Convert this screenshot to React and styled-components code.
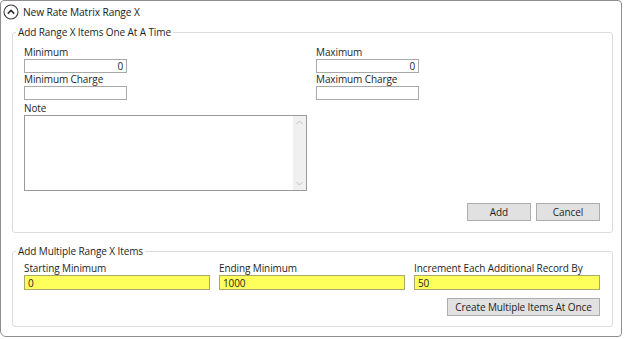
import React from "react";
import styled, { createGlobalStyle } from "styled-components";

const GlobalStyle = createGlobalStyle`
  html, body {
    margin: 0;
    padding: 0;
    background: #ffffff;
  }
  body {
    font-family: "Open Sans", "Noto Sans", Arial, sans-serif;
    font-size: 10px;
    letter-spacing: -0.1px;
    color: #1e1e1e;
  }
`;

const Frame = styled.div`
  width: 622px;
  box-sizing: border-box;
  border: 1px solid #8e8e8e;
  border-radius: 4px 4px 4px 6px;
  padding-bottom: 9px;
`;

const Header = styled.div`
  display: flex;
  align-items: center;
  gap: 4px;
  height: 22px;
  padding-left: 2px;
  font-size: 10.2px;
  color: #1a1a1a;
`;

const Group = styled.fieldset`
  margin: ${p => p.$top}px 8px 0 11px;
  padding: 0;
  border: 1px solid #dcdcdc;
  border-radius: 3px;
  min-width: 0;
`;

const Legend = styled.legend`
  margin-left: 3px;
  padding: 0 2px;
  line-height: 13px;
  font-size: 10px;
  color: #1e1e1e;
`;

const Body = styled.div`
  padding: ${p => p.$pad};
`;

const TwoCols = styled.div`
  display: grid;
  grid-template-columns: 283px 1fr;
  column-gap: 9px;
`;

const ThreeCols = styled.div`
  display: grid;
  grid-template-columns: repeat(3, 186px);
  column-gap: 9px;
`;

const Column = styled.div`
  display: flex;
  flex-direction: column;
`;

const Field = styled.div`
  display: flex;
  flex-direction: column;
  margin-top: ${p => p.$top || 0}px;
`;

const Label = styled.label`
  display: block;
  height: 13px;
  line-height: 13px;
  white-space: nowrap;
  color: #1e1e1e;
`;

const TextBox = styled.input`
  box-sizing: border-box;
  width: ${p => p.$w}px;
  height: ${p => p.$h || 14}px;
  margin: 0;
  padding: 0 3px;
  border: 1px solid ${p => (p.$yellow ? "#a8a86a" : "#a9a9a9")};
  background: ${p => (p.$yellow ? "#ffff5c" : "#ffffff")};
  font-family: inherit;
  font-size: 10px;
  letter-spacing: -0.1px;
  color: #1e1e1e;
  text-align: ${p => (p.$right ? "right" : "left")};
  outline: none;
`;

const NoteBox = styled.div`
  display: flex;
  box-sizing: border-box;
  width: 283px;
  height: 76px;
  border: 1px solid #9a9a9a;
  background: #ffffff;
`;

const NoteInput = styled.textarea`
  flex: 1;
  margin: 0;
  border: none;
  resize: none;
  outline: none;
  font-family: inherit;
  font-size: 10px;
  overflow: hidden;
`;

const ScrollTrack = styled.div`
  width: 13px;
  background: #f0f0f0;
  display: flex;
  flex-direction: column;
  justify-content: space-between;
  align-items: center;
  padding: 4px 0;
`;

const ButtonRow = styled.div`
  display: flex;
  justify-content: flex-end;
  gap: 5px;
  margin-top: ${p => p.$top}px;
`;

const Button = styled.button`
  box-sizing: border-box;
  width: ${p => p.$w}px;
  height: 18px;
  margin: 0;
  padding: 0;
  border: 1px solid #adadad;
  background: #e1e1e1;
  font-family: inherit;
  font-size: 10px;
  letter-spacing: -0.1px;
  color: #1e1e1e;
`;

function CollapseIcon() {
  return (
    <svg width="16" height="16" viewBox="0 0 16 16">
      <circle cx="8" cy="8" r="7" fill="none" stroke="#3c3c3c" strokeWidth="1.1" />
      <polyline points="4.8,9.6 8,6.4 11.2,9.6" fill="none" stroke="#2a2a2a" strokeWidth="1.5" />
    </svg>
  );
}

function Arrow({ up }) {
  return (
    <svg width="7" height="5" viewBox="0 0 7 5">
      <polyline
        points={up ? "0.5,4 3.5,1 6.5,4" : "0.5,1 3.5,4 6.5,1"}
        fill="none"
        stroke="#c2c2c2"
        strokeWidth="1"
      />
    </svg>
  );
}

export default function App() {
  return (
    <>
      <GlobalStyle />
      <Frame>
        <Header>
          <CollapseIcon />
          <span>New Rate Matrix Range X</span>
        </Header>

        <Group $top={3}>
          <Legend>Add Range X Items One At A Time</Legend>
          <Body $pad="7px 12px 11px 11px">
            <TwoCols>
              <Column>
                <Field>
                  <Label>Minimum</Label>
                  <TextBox $w={103} $right defaultValue="0" />
                </Field>
                <Field>
                  <Label>Minimum Charge</Label>
                  <TextBox $w={103} $right defaultValue="" />
                </Field>
                <Field $top={2}>
                  <Label>Note</Label>
                  <NoteBox>
                    <NoteInput />
                    <ScrollTrack>
                      <Arrow up />
                      <Arrow />
                    </ScrollTrack>
                  </NoteBox>
                </Field>
              </Column>
              <Column>
                <Field>
                  <Label>Maximum</Label>
                  <TextBox $w={103} $right defaultValue="0" />
                </Field>
                <Field>
                  <Label>Maximum Charge</Label>
                  <TextBox $w={103} $right defaultValue="" />
                </Field>
              </Column>
            </TwoCols>
            <ButtonRow $top={12}>
              <Button $w={64}>Add</Button>
              <Button $w={64}>Cancel</Button>
            </ButtonRow>
          </Body>
        </Group>

        <Group $top={12}>
          <Legend>Add Multiple Range X Items</Legend>
          <Body $pad="4px 12px 10px 11px">
            <ThreeCols>
              <Field>
                <Label>Starting Minimum</Label>
                <TextBox $w={186} $h={15} $yellow defaultValue="0" />
              </Field>
              <Field>
                <Label>Ending Minimum</Label>
                <TextBox $w={186} $h={15} $yellow defaultValue="1000" />
              </Field>
              <Field>
                <Label>Increment Each Additional Record By</Label>
                <TextBox $w={186} $h={15} $yellow defaultValue="50" />
              </Field>
            </ThreeCols>
            <ButtonRow $top={8}>
              <Button $w={153}>Create Multiple Items At Once</Button>
            </ButtonRow>
          </Body>
        </Group>
      </Frame>
    </>
  );
}
